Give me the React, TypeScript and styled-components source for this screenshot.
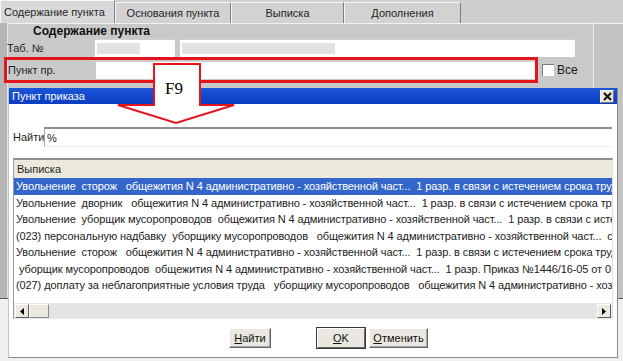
import styled, { createGlobalStyle } from "styled-components";

const GlobalStyle = createGlobalStyle`
  html, body {
    margin: 0;
    padding: 0;
  }
  body {
    width: 623px;
    height: 361px;
    overflow: hidden;
    background: #efefef;
    font-family: "Liberation Sans", Arial, sans-serif;
    font-size: 11px;
    color: #1e1e1e;
  }
`;

const rows = [
  "Увольнение  сторож   общежития N 4 административно - хозяйственной част...  1 разр. в связи с истечением срока трудового договора",
  "Увольнение  дворник   общежития N 4 административно - хозяйственной част...  1 разр. в связи с истечением срока трудового договора",
  "Увольнение  уборщик мусоропроводов  общежития N 4 административно - хозяйственной част...  1 разр. в связи с истечением срока",
  "(023) персональную надбавку  уборщику мусоропроводов   общежития N 4 административно - хозяйственной част...  с 01.05",
  "Увольнение  сторож   общежития N 4 административно - хозяйственной част...  1 разр. в связи с истечением срока трудового договора",
  " уборщик мусоропроводов  общежития N 4 административно - хозяйственной част...  1 разр. Приказ №1446/16-05 от 01.05",
  "(027) доплату за неблагоприятные условия труда   уборщику мусоропроводов   общежития N 4 административно - хозяйственной",
];

const tabs = [
  { label: "Содержание пункта", width: 115, active: true },
  { label: "Основания пункта", width: 116 },
  { label: "Выписка", width: 113 },
  { label: "Дополнения", width: 117 },
];

const App = () => {
  return (
    <>
      <GlobalStyle />
      <Screen>
        <Window>
          <TabBar>
            {tabs.map((t) => (
              <Tab key={t.label} $w={t.width} $active={t.active}>
                {t.label}
              </Tab>
            ))}
          </TabBar>
          <WindowBody>
            <LeftStrip />
            <Panel>
              <Heading>Содержание пункта</Heading>
              <FieldRow>
                <Label>Таб. №</Label>
                <Input $w={80}>
                  <Masked $w={43} />
                </Input>
                <Input $w={395} $gap={5}>
                  <Masked $w={153} />
                </Input>
              </FieldRow>
              <PunktRow>
                <RedFrame>
                  <Label>Пункт пр.</Label>
                  <Input $grow />
                </RedFrame>
                <Check />
                <CheckText>Все</CheckText>
              </PunktRow>
            </Panel>
            <RightStrip />
          </WindowBody>
        </Window>

        <Dialog>
          <TitleBar>
            <span>Пункт приказа</span>
            <CloseBtn>
              <svg width="9" height="9" viewBox="0 0 9 9">
                <path d="M1 1 L8 8 M8 1 L1 8" stroke="#111" strokeWidth="2" />
              </svg>
            </CloseBtn>
          </TitleBar>
          <DialogBody>
            <FindRow>
              <FindLabel>Найти</FindLabel>
              <FindInput>%</FindInput>
            </FindRow>
            <ListBox>
              <ListHeader>Выписка</ListHeader>
              <ListRows>
                {rows.map((r, i) => (
                  <ListRow key={i} $selected={i === 0}>
                    {r}
                  </ListRow>
                ))}
              </ListRows>
              <HScroll>
                <ScrollBtn>
                  <svg width="4" height="7" viewBox="0 0 4 7">
                    <path d="M4 0 L0 3.5 L4 7 Z" fill="#000" />
                  </svg>
                </ScrollBtn>
                <Thumb />
                <Track />
                <ScrollBtn>
                  <svg width="4" height="7" viewBox="0 0 4 7">
                    <path d="M0 0 L4 3.5 L0 7 Z" fill="#000" />
                  </svg>
                </ScrollBtn>
              </HScroll>
            </ListBox>
            <ButtonRow>
              <Button $w={42}>
                <u>Н</u>айти
              </Button>
              <Button $w={48} $gap={46} $default>
                <u>O</u>K
              </Button>
              <Button $w={59} $gap={4}>
                <u>О</u>тменить
              </Button>
            </ButtonRow>
          </DialogBody>
        </Dialog>

        <Arrow>
          <svg width="124" height="64" viewBox="0 0 124 64">
            <polygon
              points="38,1 84,1 84,42 118,42 60,60 2,42 38,42"
              fill="#fff"
              stroke="#e3141c"
              strokeWidth="2"
            />
          </svg>
          <ArrowText>F9</ArrowText>
        </Arrow>
      </Screen>
    </>
  );
};

export default App;

const Screen = styled.div`
  position: relative;
  width: 623px;
  height: 361px;
  overflow: hidden;
`;

const Window = styled.div`
  height: 298px;
  background: #c9c9c9;
  border-bottom: 1px solid #5a5a5a;
  display: flex;
  flex-direction: column;
`;

const TabBar = styled.div`
  display: flex;
  align-items: flex-end;
  height: 23px;
  background: #cfcfcf;
`;

const Tab = styled.div<{ $w: number; $active?: boolean }>`
  box-sizing: border-box;
  width: ${(p) => p.$w}px;
  height: ${(p) => (p.$active ? 23 : 21)}px;
  border-top: 1px solid #f6f6f6;
  border-left: 1px solid #f6f6f6;
  border-right: 1px solid #7d7d7d;
  background: ${(p) => (p.$active ? "#d8d8d8" : "#d2d2d2")};
  display: flex;
  align-items: center;
  justify-content: ${(p) => (p.$active ? "flex-start" : "center")};
  padding-left: ${(p) => (p.$active ? 3 : 0)}px;
  color: #262626;
  white-space: nowrap;
`;

const WindowBody = styled.div`
  flex: 1;
  display: flex;
`;

const LeftStrip = styled.div`
  width: 7px;
  background: #b5b5b5;
`;

const Panel = styled.div`
  width: 585px;
  border-top: 1px solid #f2f2f2;
  border-left: 1px solid #e6e6e6;
  background: #c9c9c9;
  display: flex;
  flex-direction: column;
`;

const RightStrip = styled.div`
  flex: 1;
  border-left: 1px solid #ececec;
  border-top: 1px solid #f2f2f2;
  background: #c3c3c3;
`;

const Heading = styled.div`
  height: 14px;
  line-height: 14px;
  padding-left: 25px;
  font-weight: bold;
  font-size: 12px;
  color: #111;
`;

const FieldRow = styled.div`
  display: flex;
  align-items: center;
  height: 19px;
`;

const Label = styled.div`
  width: 88px;
  flex-shrink: 0;
  align-self: stretch;
  display: flex;
  align-items: center;
  margin-left: -1px;
  color: #1e1e1e;
`;

const Input = styled.div<{ $w?: number; $gap?: number; $grow?: boolean }>`
  box-sizing: border-box;
  ${(p) => (p.$grow ? "flex: 1;" : `width: ${p.$w}px;`)}
  margin-left: ${(p) => p.$gap ?? 0}px;
  height: 18px;
  background: #fff;
  border-top: 1px solid #d0d0d0;
  display: flex;
  align-items: center;
  padding-left: 2px;
`;

const Masked = styled.div<{ $w: number }>`
  width: ${(p) => p.$w}px;
  height: 11px;
  background: #e2e2e2;
`;

const PunktRow = styled.div`
  display: flex;
  align-items: center;
  margin-left: -4px;
`;

const RedFrame = styled.div`
  box-sizing: border-box;
  width: 534px;
  height: 26px;
  border: 3px solid #e3141c;
  display: flex;
  align-items: center;
  padding-left: 1px;
  & > div:first-child {
    margin-left: 0;
  }
`;

const Check = styled.div`
  box-sizing: border-box;
  width: 12px;
  height: 12px;
  margin-left: 4px;
  background: #fff;
  border-top: 1px solid #7a7a7a;
  border-left: 1px solid #7a7a7a;
`;

const CheckText = styled.span`
  margin-left: 3px;
  font-size: 12px;
  color: #1a1a1a;
`;

const Dialog = styled.div`
  position: absolute;
  left: 8px;
  top: 88px;
  box-sizing: border-box;
  width: 610px;
  height: 270px;
  background: #fff;
  border-left: 1px solid #c4c4c4;
  border-right: 1px solid #8a8a8a;
  border-bottom: 1px solid #8a8a8a;
  display: flex;
  flex-direction: column;
`;

const TitleBar = styled.div`
  height: 16px;
  background: linear-gradient(#1c55d8, #0a3cc2);
  color: #fff;
  display: flex;
  align-items: center;
  justify-content: space-between;
  padding: 0 3px 0 3px;
`;

const CloseBtn = styled.div`
  box-sizing: border-box;
  width: 14px;
  height: 13px;
  background: #e9e7dd;
  border: 1px solid;
  border-color: #fff #6f6f6f #6f6f6f #fff;
  display: flex;
  align-items: center;
  justify-content: center;
`;

const DialogBody = styled.div`
  flex: 1;
  display: flex;
  flex-direction: column;
  padding: 0 4px 0 4px;
`;

const FindRow = styled.div`
  display: flex;
  align-items: stretch;
  height: 20px;
  margin-top: 23px;
`;

const FindLabel = styled.div`
  width: 31px;
  display: flex;
  align-items: center;
`;

const FindInput = styled.div`
  flex: 1;
  margin-right: 1px;
  box-sizing: border-box;
  border-top: 2px solid #8e8e8e;
  border-left: 1px solid #a2a2a2;
  border-bottom: 1px solid #f0f0f0;
  display: flex;
  align-items: center;
  padding-left: 2px;
`;

const ListBox = styled.div`
  box-sizing: border-box;
  margin-top: 11px;
  height: 161px;
  border-top: 2px solid #8e8e8e;
  border-left: 1px solid #9c9c9c;
  border-right: 1px solid #e2e2e2;
  display: flex;
  flex-direction: column;
  overflow: hidden;
`;

const ListHeader = styled.div`
  height: 18px;
  line-height: 18px;
  background: #ebe9db;
  padding-left: 3px;
  flex-shrink: 0;
`;

const ListRows = styled.div`
  flex: 1;
  overflow: hidden;
`;

const ListRow = styled.div<{ $selected?: boolean }>`
  height: 16.5px;
  line-height: 16.5px;
  white-space: pre;
  overflow: hidden;
  padding-left: 2px;
  letter-spacing: -0.1px;
  background: ${(p) => (p.$selected ? "#3466c9" : "transparent")};
  color: ${(p) => (p.$selected ? "#fff" : "#222")};
`;

const HScroll = styled.div`
  height: 16px;
  flex-shrink: 0;
  display: flex;
  background: #e8e8e8;
  padding: 1px;
  box-sizing: border-box;
`;

const ScrollBtn = styled.div`
  box-sizing: border-box;
  width: 14px;
  background: #ebe9e0;
  border: 1px solid;
  border-color: #fff #5e5e5e #5e5e5e #fff;
  display: flex;
  align-items: center;
  justify-content: center;
`;

const Thumb = styled.div`
  box-sizing: border-box;
  width: 20px;
  background: #ebe9e0;
  border: 1px solid;
  border-color: #fff #8a8a8a #8a8a8a #fff;
`;

const Track = styled.div`
  flex: 1;
  background: #e4e4e4;
`;

const ButtonRow = styled.div`
  display: flex;
  margin-top: 9px;
  padding-left: 216px;
`;

const Button = styled.div<{ $w: number; $gap?: number; $default?: boolean }>`
  box-sizing: border-box;
  width: ${(p) => p.$w}px;
  height: 20px;
  margin-left: ${(p) => p.$gap ?? 0}px;
  background: #e9e7df;
  border: 1px solid;
  border-color: #fff #666 #666 #fff;
  box-shadow: ${(p) =>
    p.$default ? "0 0 0 1px #3a3a3a" : "inset -1px -1px #a8a8a8"};
  display: flex;
  align-items: center;
  justify-content: center;
  color: #111;
  u {
    text-decoration: underline;
  }
`;

const Arrow = styled.div`
  position: absolute;
  left: 116px;
  top: 63px;
  width: 124px;
  height: 64px;
  svg {
    display: block;
  }
`;

const ArrowText = styled.span`
  position: absolute;
  left: 49px;
  top: 16px;
  font-family: "Liberation Serif", "Times New Roman", serif;
  font-size: 17px;
  color: #000;
`;
